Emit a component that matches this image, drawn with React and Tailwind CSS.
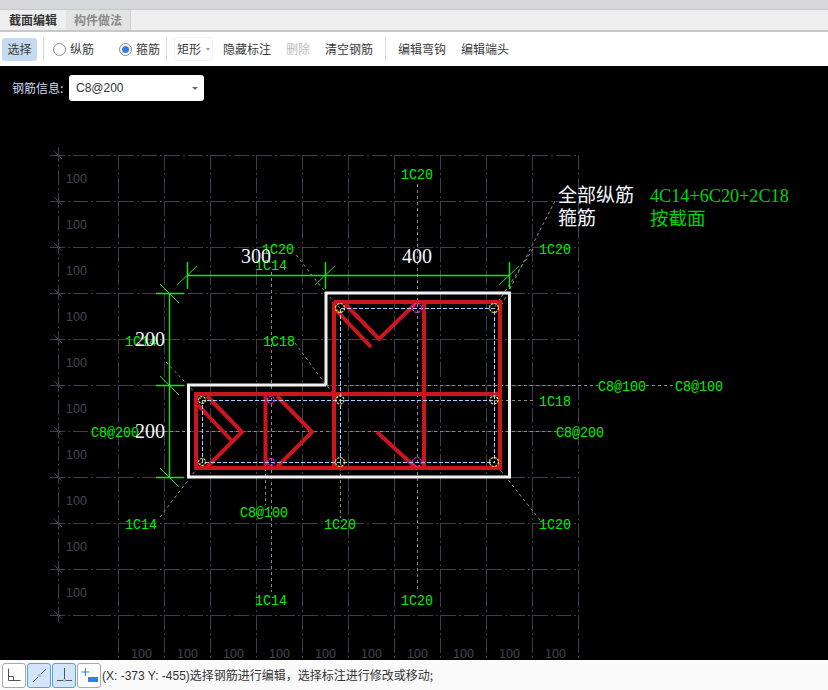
const CJK = '"Noto Sans CJK SC","Liberation Sans",sans-serif';

const gridXs = [118, 164, 210, 256, 302, 348, 394, 440, 486, 532, 578];
const gridYs = [155, 201, 247, 293, 339, 385, 431, 477, 523, 569, 615];

const labels = [
  ["1C20", 417, 179], ["1C20", 278, 254], ["1C14", 271, 270], ["1C20", 555, 254],
  ["1C18", 279, 346], ["1C14", 141, 346], ["C8@100", 622, 391], ["C8@100", 699, 391],
  ["1C18", 555, 406], ["C8@200", 115, 437], ["C8@200", 580, 437], ["C8@100", 264, 517],
  ["1C14", 141, 529], ["1C20", 340, 529], ["1C20", 555, 529], ["1C14", 271, 605], ["1C20", 417, 605],
];

const leaders = [
  "M271.5 272V592", "M417.5 184V592", "M326 385.5H598", "M646 385.5H675", "M494 400.5H536", "M140 431.5H556",
  "M265.5 468V505", "M340.5 462V518", "M296 255L326 293L340 308", "M295 343L326 385L340 400",
  "M166 362L202 400", "M160 517L202 462", "M540 520L494 462",
  "M555 201L500 308", "M533 249L494 308",
];

const redLines = [
  "M334 302H500V468H196V394H500", "M334 302V468", "M424 302V468", "M265.5 394V468",
  "M345 304L379 339L415 304", "M336 310L371 347", "M377 432L415 467",
  "M207 396L242 432L207 467", "M198 405L232 441", "M277 396L312 432L277 467",
];

const yellow = [[340, 308, 4.5], [494, 308, 4.5], [340, 400, 4], [494, 400, 4], [340, 462, 4.5], [494, 462, 4.5], [202, 400, 3.5], [202, 462, 3.5]];
const magenta = [[417, 308, 4.5], [417, 462, 4.5], [271, 400, 3.5], [271, 462, 3.5]];

function Drawing() {
  return (
    <svg className="block h-[552px] w-[828px]" viewBox="0 108 828 552" width="828" height="552">
      <g stroke="#3b404e" strokeWidth="1" shapeRendering="crispEdges" fill="none">
        {gridYs.map((y) => <path key={y} d={`M50 ${y + 0.5}H578`} strokeDasharray="15 3 2 3" />)}
        {gridXs.map((x) => <path key={x} d={`M${x + 0.5} 155V660`} strokeDasharray="15 3 2 3" />)}
        <path d="M58.5 147V623" strokeDasharray="15 3 2 3" />
      </g>
      <g stroke="#3b404e" strokeWidth="1">
        {gridYs.map((y) => <path key={y} d={`M54 ${y - 4}L62 ${y + 4}`} />)}
      </g>
      <g fill="#414654" fontFamily='"Liberation Sans",sans-serif' fontSize="12.5">
        {gridYs.slice(0, 10).map((y) => <text key={y} x="66" y={y + 28}>100</text>)}
        {gridXs.slice(0, 10).map((x) => <text key={x} x={x + 13} y="658">100</text>)}
      </g>
      <g stroke="#8a8a8a" strokeWidth="1" strokeDasharray="3 3" fill="none">
        {leaders.map((d) => <path key={d} d={d} />)}
      </g>
      <path d="M326 385H188.5V477H509.5V293H326V385" stroke="#f2f2f2" strokeWidth="3" fill="none" />
      <g stroke="#cc161f" strokeWidth="4" fill="none" strokeLinejoin="miter">
        {redLines.map((d) => <path key={d} d={d} />)}
      </g>
      <path d="M340.5 308.5H494.5V462.5H202.5V400.5H494.5M340.5 308.5V462.5" stroke="#a4d3ff" strokeWidth="1" strokeDasharray="4 2" fill="none" shapeRendering="crispEdges" />
      <g fill="none" strokeWidth="1.2" strokeDasharray="2.5 1">
        {yellow.map(([x, y, r]) => <circle key={`${x}-${y}`} cx={x} cy={y} r={r} stroke="#ffe14a" />)}
        {magenta.map(([x, y, r]) => <circle key={`${x}-${y}`} cx={x} cy={y} r={r} stroke="#ff22ff" />)}
      </g>
      <g stroke="#00f000" strokeWidth="1.4" fill="none">
        <path d="M187 275.5H510M187.5 262V289M325.5 262V289M509.5 262V289" />
        <path d="M169.5 293V477M156 293.5H184M156 385.5H184M156 477.5H184" />
      </g>
      <g stroke="#1fe61f" strokeWidth="1" fill="none">
        <path d="M177 285L197 266M315 285L335 266M499 285L519 266" />
        <path d="M160 284L179 303M160 376L179 395M160 468L179 487" />
      </g>
      <g fill="#00f000" fontFamily='"Liberation Mono",monospace' fontSize="15.5">
        {labels.map(([t, x, y], i) => (
          <text key={i} x={x - (t.length * 8) / 2} y={y} textLength={t.length * 8} lengthAdjust="spacingAndGlyphs">{t}</text>
        ))}
      </g>
      <g fill="#f4f8ff" fontFamily='"Liberation Serif",serif' fontSize="20" textAnchor="middle">
        <text x="256" y="263">300</text>
        <text x="417" y="263">400</text>
        <text x="150" y="346">200</text>
        <text x="150" y="438">200</text>
      </g>
      <g fontFamily={`"Liberation Serif","Noto Sans CJK SC",serif`} fontSize="18.2">
        <text x="558" y="202" fill="#f4f8ff" fontSize="19">全部纵筋</text>
        <text x="558" y="225" fill="#f4f8ff" fontSize="19">箍筋</text>
        <text x="650" y="202" fill="#00d400">4C14+6C20+2C18</text>
        <text x="650" y="225" fill="#00d400" fontSize="18.5">按截面</text>
      </g>
    </svg>
  );
}

function Radio({ checked, label, className = "" }) {
  return (
    <div className={`flex items-center gap-[4px] ${className}`}>
      <span className="flex h-[13px] w-[13px] items-center justify-center rounded-full border border-[#8a8a8a] bg-white">
        {checked && <span className="h-[7px] w-[7px] rounded-full bg-[#2f7fe6]" />}
      </span>
      <span>{label}</span>
    </div>
  );
}

function ToolButton({ active, children }) {
  return (
    <div className={`flex h-[25px] w-[24px] items-center justify-center rounded-[3px] border ${active ? "border-[#5a9ee8] bg-[#d4e4fa]" : "border-[#a9a9a9] bg-white"}`}>
      <svg width="19" height="19" viewBox="0 0 19 19" fill="none">{children}</svg>
    </div>
  );
}

export default function App() {
  return (
    <div className="flex h-[690px] w-[828px] flex-col overflow-hidden bg-white text-[12px] text-[#333]" style={{ fontFamily: CJK }}>
      <div className="h-[10px] border-b border-[#c6c8cc] bg-[#d5d7db]" />
      <div className="flex h-[22px] border-b-2 border-[#c8c8c8] bg-[#eeeeee]">
        <div className="flex w-[66px] items-center justify-center font-bold text-[#333]">截面编辑</div>
        <div className="flex w-[65px] items-center justify-center border-r border-[#d0d0d0] bg-[#e3e3e3] font-bold text-[#8a8a8a]">构件做法</div>
      </div>
      <div className="flex h-[34px] items-center bg-white text-[#3a3a3a]">
        <div className="ml-[2px] flex h-[23px] w-[35px] items-center justify-center rounded-[3px] bg-[#c5daf0]">选择</div>
        <div className="ml-[6px] h-[24px] w-px bg-[#d8d8d8]" />
        <Radio label="纵筋" className="ml-[9px] w-[66px]" />
        <Radio checked label="箍筋" />
        <div className="ml-[6px] h-[24px] w-px bg-[#d8d8d8]" />
        <div className="ml-[7px] flex h-[24px] w-[39px] items-center rounded-[3px] border border-[#f2f2f2] pl-[2px]">
          <span>矩形</span>
          <span className="ml-[5px] h-0 w-0 border-x-[2.5px] border-t-[3px] border-x-transparent border-t-[#999]" />
        </div>
        <span className="ml-[10px]">隐藏标注</span>
        <span className="ml-[15px] text-[#bdbdbd]">删除</span>
        <span className="ml-[15px]">清空钢筋</span>
        <div className="ml-[12px] h-[24px] w-px bg-[#d8d8d8]" />
        <span className="ml-[12px]">编辑弯钩</span>
        <span className="ml-[15px]">编辑端头</span>
      </div>
      <div className="flex h-[594px] flex-col bg-black">
        <div className="flex h-[42px] items-start pt-[9px] pl-[12px] text-[#c9dcf0]">
          <span className="w-[57px] leading-[26px]">钢筋信息:</span>
          <div className="flex h-[26px] w-[135px] items-center justify-between rounded-[3px] bg-white pr-[6px] pl-[7px] text-[12px] text-[#333]" style={{ fontFamily: '"Liberation Sans",sans-serif' }}>
            <span>C8@200</span>
            <span className="h-0 w-0 border-x-[3px] border-t-[3px] border-x-transparent border-t-[#666]" />
          </div>
        </div>
        <Drawing />
      </div>
      <div className="flex h-[30px] items-center bg-[#fafafa] pl-[2px]">
        <div className="flex gap-px">
          <ToolButton>
            <path d="M3.5 2.5V14.5H15.5M3.5 10.5H8.5V14.5" stroke="#555" />
          </ToolButton>
          <ToolButton active>
            <path d="M3 16L16 3" stroke="#666" />
            <rect x="8" y="8" width="3" height="3" fill="#9cc3f2" />
          </ToolButton>
          <ToolButton active>
            <path d="M9.5 2V13.5M2 14.5H17" stroke="#555" />
            <circle cx="9.5" cy="14.5" r="1.5" fill="#9cc3f2" />
          </ToolButton>
          <ToolButton>
            <path d="M5.5 2V10M1.5 6H9.5" stroke="#2f7fe6" />
            <rect x="8" y="11" width="10" height="5" fill="#2f7fe6" />
          </ToolButton>
        </div>
        <span className="ml-px whitespace-nowrap text-[#333]">
          <span style={{ fontFamily: '"Liberation Sans",sans-serif' }}>(X: -373 Y: -455)</span>选择钢筋进行编辑，选择标注进行修改或移动;
        </span>
      </div>
    </div>
  );
}
